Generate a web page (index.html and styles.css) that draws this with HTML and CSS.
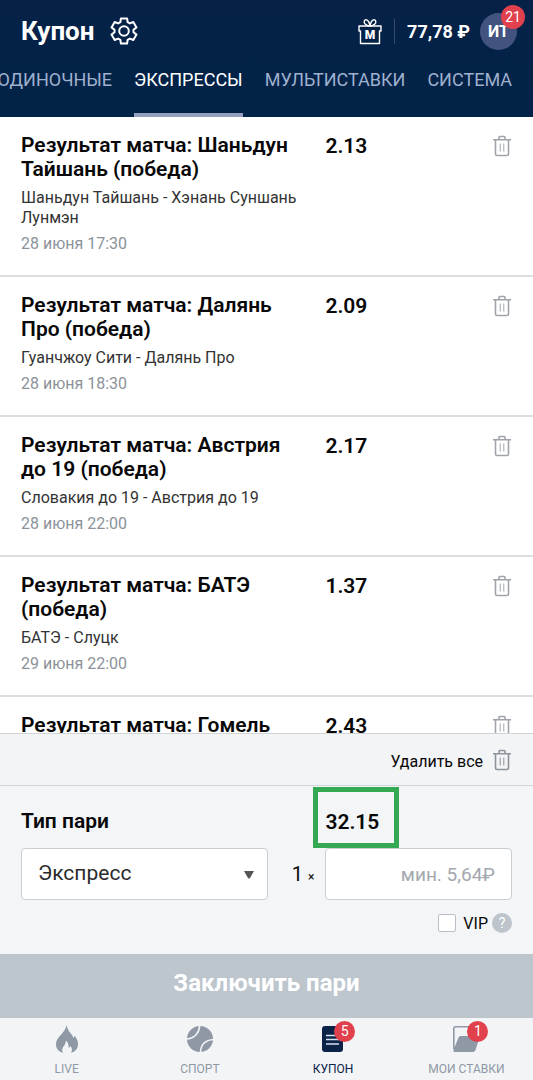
FILE: index.html
```html
<!DOCTYPE html>
<html lang="ru">
<head>
<meta charset="utf-8">
<meta name="viewport" content="width=device-width, initial-scale=1">
<title>Купон</title>
<link rel="stylesheet" href="styles.css">
</head>
<body>
<svg class="sprite" aria-hidden="true">
  <symbol id="trash" viewBox="0 0 18 22">
    <path d="M0 4.700h18M6 4.500V2.300q0-.8.8-.8h4.400q.8 0 .8.800v2.200M2.500 5v14q0 1.500 1.500 1.500h10q1.500 0 1.500-1.500V5" fill="none" stroke="currentColor" stroke-width="1.600"/>
    <path d="M7.200 8.500v8M10.800 8.500v8" fill="none" stroke="currentColor" stroke-width="1"/>
  </symbol>
</svg>
<header class="header">
  <div class="topbar">
    <h1 class="page-title">Купон</h1>
    <button class="icon-button" aria-label="Настройки">
      <svg class="gear" viewBox="0 0 28 28" fill="none" stroke="currentColor" stroke-width="2" stroke-linejoin="round">
        <path d="M10.400 5.100L10.900 1.400H17.100L17.600 5.100L19.900 6.400L23.300 5L26.500 10.400L23.500 12.700V15.300L26.500 17.600L23.300 23L19.900 21.600L17.600 22.900L17.100 26.600H10.900L10.400 22.900L8.100 21.600L4.700 23L1.500 17.600L4.500 15.300V12.700L1.500 10.400L4.700 5L8.100 6.400Z"/>
        <circle cx="14" cy="14" r="4.800"/>
      </svg>
    </button>
    <div class="account">
      <button class="icon-button" aria-label="Бонусы">
        <span class="gift">
          <svg class="gift-icon" viewBox="0 0 24 27" fill="none" stroke="currentColor" stroke-width="1.400" stroke-linejoin="round">
            <path d="M1 8h22v5h-1.500v12.500h-19V13H1z"/>
            <path d="M12 8C8 7.500 5.500 5.500 6.300 3c.8-2.400 4.700-1.800 5.700 5 1-6.800 4.900-7.400 5.700-5C18.500 5.500 16 7.500 12 8z"/>
          </svg>
          <span class="gift-letter">М</span>
        </span>
      </button>
      <span class="divider"></span>
      <span class="balance">77,78 ₽</span>
      <button class="avatar">ИТ<span class="badge badge-avatar">21</span></button>
    </div>
  </div>
  <nav class="tabs">
    <a class="tab" href="#">ОДИНОЧНЫЕ</a>
    <a class="tab tab-active" href="#">ЭКСПРЕССЫ</a>
    <a class="tab" href="#">МУЛЬТИСТАВКИ</a>
    <a class="tab" href="#">СИСТЕМА</a>
  </nav>
</header>

<main class="bets">
  <article class="bet">
    <div class="bet-info">
      <h2 class="bet-title">Результат матча: Шаньдун Тайшань (победа)</h2>
      <p class="bet-match">Шаньдун Тайшань - Хэнань Суншань Лунмэн</p>
      <p class="bet-date">28 июня 17:30</p>
    </div>
    <div class="bet-side"><span class="odds">2.13</span><button class="icon-button trash-button" aria-label="Удалить"><svg class="trash"><use href="#trash"/></svg></button></div>
  </article>
  <article class="bet">
    <div class="bet-info">
      <h2 class="bet-title">Результат матча: Далянь Про (победа)</h2>
      <p class="bet-match">Гуанчжоу Сити - Далянь Про</p>
      <p class="bet-date">28 июня 18:30</p>
    </div>
    <div class="bet-side"><span class="odds">2.09</span><button class="icon-button trash-button" aria-label="Удалить"><svg class="trash"><use href="#trash"/></svg></button></div>
  </article>
  <article class="bet">
    <div class="bet-info">
      <h2 class="bet-title">Результат матча: Австрия до 19 (победа)</h2>
      <p class="bet-match">Словакия до 19 - Австрия до 19</p>
      <p class="bet-date">28 июня 22:00</p>
    </div>
    <div class="bet-side"><span class="odds">2.17</span><button class="icon-button trash-button" aria-label="Удалить"><svg class="trash"><use href="#trash"/></svg></button></div>
  </article>
  <article class="bet">
    <div class="bet-info">
      <h2 class="bet-title">Результат матча: БАТЭ (победа)</h2>
      <p class="bet-match">БАТЭ - Слуцк</p>
      <p class="bet-date">29 июня 22:00</p>
    </div>
    <div class="bet-side"><span class="odds">1.37</span><button class="icon-button trash-button" aria-label="Удалить"><svg class="trash"><use href="#trash"/></svg></button></div>
  </article>
  <article class="bet">
    <div class="bet-info">
      <h2 class="bet-title">Результат матча: Гомель</h2>
    </div>
    <div class="bet-side"><span class="odds">2.43</span><button class="icon-button trash-button" aria-label="Удалить"><svg class="trash"><use href="#trash"/></svg></button></div>
  </article>
</main>

<div class="clear-row">
  <button class="clear-button"><span class="clear-text">Удалить все</span><svg class="trash"><use href="#trash"/></svg></button>
</div>

<form class="stake">
  <div class="stake-grid">
    <label class="stake-label" for="type">Тип пари</label>
    <div class="stake-odds"><output class="total">32.15</output></div>
    <div class="stake-type">
      <span class="select-wrap">
        <select class="select" id="type"><option>Экспресс</option></select>
        <svg class="caret" viewBox="0 0 10 8"><path d="M0 0h10L6 7Q5 8 4 7z" fill="currentColor"/></svg>
      </span>
      <span class="count">1 <span class="times">×</span></span>
    </div>
    <input class="amount" type="text" aria-label="Сумма" placeholder="мин. 5,64₽">
  </div>
  <div class="vip-row">
    <label class="vip"><input class="checkbox" type="checkbox">VIP</label>
    <button class="help" type="button" aria-label="Справка">?</button>
  </div>
  <button class="submit" type="button">Заключить пари</button>
</form>

<nav class="bottom-nav">
  <a class="nav-item" href="#">
    <span class="nav-icon"><svg viewBox="0 0 28 28"><path d="M13.500 0c1 4.500 3 7.500 5.500 10 .7.900 1 1.900 1.200 3 .7-.5 1.200-1.200 1.500-2.300 2.500 3.200 3.600 6.400 3.300 9.300-.4 4-2.800 6.600-7 8 1.600-2.700 1.200-5-.6-7-.5 1-.9 1.500-1.700 1.900.2-3-.7-5.400-2.700-7.400-.2 2.600-1.300 4.400-2.700 6.300-1.400 2-1.500 3.900-.3 6.200C5.600 26.600 3 23.500 3 19.300c0-4 2-6.300 5-9.600C10.600 6.800 13 4 13.500 0z" fill="currentColor"/></svg></span>
    <span>LIVE</span>
  </a>
  <a class="nav-item" href="#">
    <span class="nav-icon"><svg viewBox="0 0 28 28"><circle cx="14" cy="14" r="13" fill="currentColor"/><path d="M13.500 0C14 7 9 13.500 0 14M28 14.500C19 15 14.500 20 14.500 28" fill="none" stroke="#f3f4f6" stroke-width="1.600"/></svg></span>
    <span>СПОРТ</span>
  </a>
  <a class="nav-item nav-active" href="#">
    <span class="nav-icon"><svg viewBox="0 0 28 28"><rect x="3" y="1" width="21" height="26" rx="3" fill="currentColor"/><path d="M7 10.500h10M7 14.500h13M7 19h13" stroke="#d8e1f0" stroke-width="1.500"/></svg><span class="badge badge-nav">5</span></span>
    <span>КУПОН</span>
  </a>
  <a class="nav-item" href="#">
    <span class="nav-icon"><svg viewBox="0 0 28 28"><path d="M1.800 24V3.500q0-1.700 1.700-1.700H22V12" fill="none" stroke="currentColor" stroke-width="1.600"/><path d="M8.500 11H28l-4.500 14q-.6 2-2.500 2H2.500Q.7 27 1.500 25L6.500 12.500Q7.200 11 8.500 11z" fill="currentColor"/></svg><span class="badge badge-nav">1</span></span>
    <span>МОИ СТАВКИ</span>
  </a>
</nav>
</body>
</html>
```

FILE: styles.css
```css
* { box-sizing: border-box; }

body {
  margin: 0;
  height: 100vh;
  display: flex;
  flex-direction: column;
  font-family: Roboto, "Liberation Sans", sans-serif;
  font-size: 16px;
  color: #080808;
  background: #fff;
}

button, input, select { font: inherit; color: inherit; }
button { border: 0; padding: 0; background: none; }
h1, h2, p { margin: 0; }
a { color: inherit; text-decoration: none; }
svg { display: block; }

.sprite { position: absolute; width: 0; height: 0; }

.header {
  color: #fff;
  background: linear-gradient(#062147, #012347);
}

.topbar {
  display: flex;
  align-items: center;
  height: 62px;
  padding: 0 16px 0 21px;
}

.page-title {
  font-size: 26px;
  line-height: 32px;
  font-weight: 700;
  margin-right: 15px;
}

.icon-button { display: block; }
.gear { width: 28px; height: 28px; }

.account {
  display: flex;
  align-items: center;
  margin-left: auto;
}

.gift { position: relative; display: block; }
.gift-icon { width: 24px; height: 27px; }

.gift-letter {
  position: absolute;
  inset: 10px 0 0;
  font-size: 12px;
  line-height: 15px;
  font-weight: 900;
  text-align: center;
}

.divider {
  width: 1px;
  height: 25px;
  margin: 0 12px;
  background: #33486d;
}

.balance {
  font-size: 18px;
  font-weight: 700;
  margin-right: 10px;
}

.avatar {
  position: relative;
  width: 37px;
  height: 37px;
  border-radius: 50%;
  background: #43537f;
  font-size: 16px;
  font-weight: 700;
}

.badge {
  position: absolute;
  border-radius: 50%;
  background: #e0414c;
  color: #fff;
  font-weight: 400;
  text-align: center;
}

.badge-avatar {
  top: -8px;
  right: -8px;
  width: 24px;
  height: 24px;
  font-size: 14px;
  line-height: 24px;
}

.badge-nav {
  top: -4px;
  right: -8px;
  width: 21px;
  height: 21px;
  font-size: 14px;
  line-height: 21px;
}

.tabs {
  display: flex;
  justify-content: flex-end;
  gap: 22px;
  height: 55px;
  padding-right: 21px;
  overflow: hidden;
  font-size: 18px;
  line-height: 36px;
  color: #9fb1cf;
}

.tab { flex: none; }

.tab-active {
  color: #fff;
  border-bottom: 4px solid #939fbc;
}

.bets {
  flex: 1 1 0;
  min-height: 0;
  overflow: hidden;
}

.bet {
  display: grid;
  grid-template-columns: 62% 38%;
  padding: 16px 21px 21px;
  border-bottom: 2px solid #dcdddf;
}

.bet-info { padding-right: 24px; }

.bet-title {
  font-size: 21px;
  line-height: 24px;
  font-weight: 600;
}

.bet-match {
  margin-top: 7px;
  font-size: 16px;
  line-height: 20px;
  color: #333;
}

.bet-date {
  margin-top: 6px;
  font-size: 16px;
  line-height: 20px;
  color: #8b9299;
}

.bet-side {
  display: flex;
  justify-content: space-between;
  align-items: flex-start;
}

.odds, .total {
  font-size: 21px;
  line-height: 26px;
  font-weight: 600;
}

.trash { width: 18px; height: 22px; color: #a0a4aa; }
.trash-button { padding: 2px 1px 0; }

.clear-row {
  display: flex;
  justify-content: flex-end;
  align-items: center;
  height: 53px;
  padding: 0 22px;
  background: #f3f4f6;
  border-top: 1px solid #d0d4d8;
  border-bottom: 1px solid #d0d4d8;
}

.clear-button {
  display: flex;
  align-items: center;
  gap: 10px;
  font-size: 16px;
}

.clear-text { padding-top: 4px; }
.clear-row .trash { color: #8d939b; }

.stake { background: #f3f5f7; }

.stake-grid {
  display: grid;
  grid-template-columns: 62% 38%;
  align-items: center;
  padding: 1px 21px 0;
}

.stake-label { font-size: 21px; font-weight: 600; padding-top: 6px; }

.total {
  display: inline-block;
  margin-left: -12px;
  padding: 17px 15px 8px 7px;
  border: 5px solid #34a853;
}

.stake-type {
  display: flex;
  align-items: center;
  justify-content: space-between;
  padding-right: 11px;
}

.select-wrap { position: relative; flex: 0 1 247px; }

.select, .amount {
  display: block;
  width: 100%;
  height: 52px;
  padding: 0 16px;
  border: 1px solid #c9ced3;
  border-radius: 4px;
  background: #fff;
}

.select {
  appearance: none;
  padding-bottom: 2px;
  font-size: 21px;
  color: #2b2b2b;
}

.caret {
  position: absolute;
  top: 23px;
  right: 14px;
  width: 10px;
  height: 8px;
  color: #555;
  pointer-events: none;
}

.count { font-size: 20px; white-space: nowrap; }
.times { font-size: 12px; }

.amount { font-size: 19px; text-align: right; }
.amount::placeholder { color: #a3a8ae; opacity: 1; }

.vip-row {
  display: flex;
  justify-content: flex-end;
  align-items: center;
  gap: 4px;
  height: 54px;
  padding: 0 21px 8px;
}

.vip {
  display: flex;
  align-items: center;
  gap: 7px;
  font-size: 16px;
}

.checkbox {
  appearance: none;
  width: 18px;
  height: 18px;
  margin: 0;
  border: 1px solid #b9bec4;
  border-radius: 2px;
  background: #fff;
}

.help {
  width: 20px;
  height: 20px;
  border-radius: 50%;
  background: #bdc4cc;
  color: #fff;
  font-size: 14px;
  line-height: 20px;
}

.submit {
  display: block;
  width: 100%;
  height: 64px;
  padding-bottom: 6px;
  background: #bdc5cd;
  color: #fff;
  font-size: 24px;
  font-weight: 700;
}

.bottom-nav {
  display: grid;
  grid-template-columns: repeat(4, 1fr);
  height: 62px;
  padding-top: 7px;
  background: #f3f4f6;
  color: #8f98a5;
  font-size: 12px;
}

.nav-item {
  display: flex;
  flex-direction: column;
  align-items: center;
  gap: 9px;
}

.nav-icon { position: relative; width: 28px; height: 28px; }
.nav-active { color: #0b2347; }
```
